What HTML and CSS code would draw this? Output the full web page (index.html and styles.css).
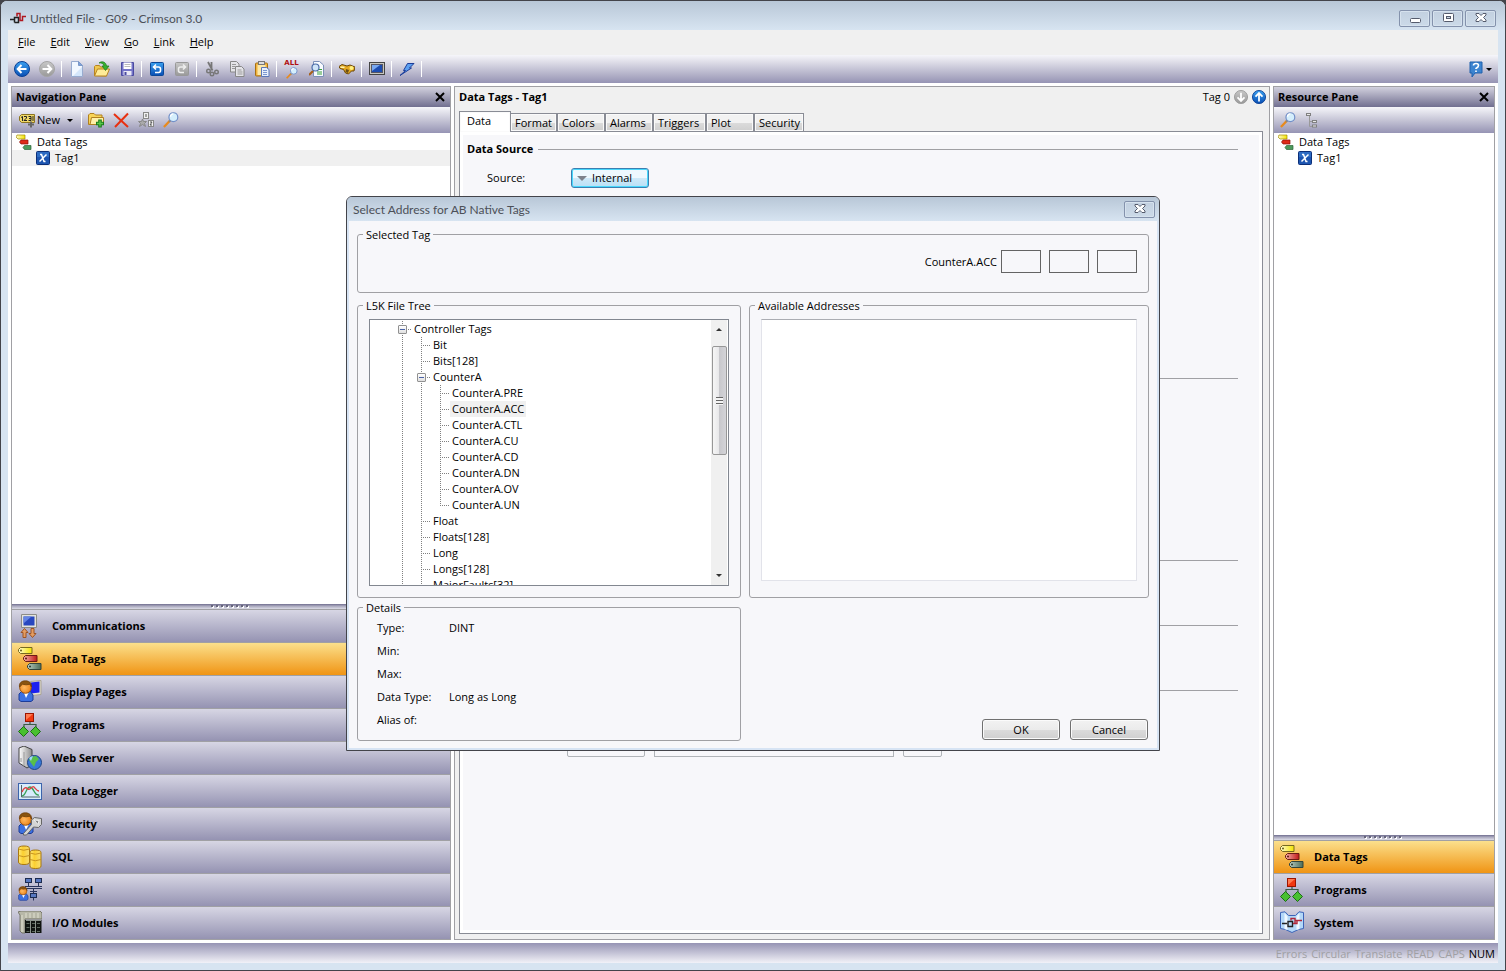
FILE: index.html
```html
<!DOCTYPE html>
<html lang="en">
<head>
<meta charset="utf-8">
<title>Untitled File - G09 - Crimson 3.0</title>
<link rel="stylesheet" href="styles.css">
</head>
<body>
<svg class="defs" aria-hidden="true">
  <defs>
    <linearGradient id="blue" x1="0" y1="0" x2="0" y2="1"><stop offset="0" stop-color="#3aa0f0"/><stop offset="1" stop-color="#0a4fb4"/></linearGradient>
    <linearGradient id="grey" x1="0" y1="0" x2="0" y2="1"><stop offset="0" stop-color="#c8c8c8"/><stop offset="1" stop-color="#999"/></linearGradient>
    <linearGradient id="yel" x1="0" y1="0" x2="1" y2="0"><stop offset="0" stop-color="#fffbd0"/><stop offset="1" stop-color="#f4e400"/></linearGradient>
    <linearGradient id="red" x1="0" y1="0" x2="1" y2="0"><stop offset="0" stop-color="#f6b0a8"/><stop offset="1" stop-color="#c01818"/></linearGradient>
    <linearGradient id="grn" x1="0" y1="0" x2="1" y2="0"><stop offset="0" stop-color="#b8ccc0"/><stop offset="1" stop-color="#4c6c58"/></linearGradient>
    <linearGradient id="gold" x1="0" y1="0" x2="1" y2="0"><stop offset="0" stop-color="#ffe97a"/><stop offset=".4" stop-color="#fbd030"/><stop offset="1" stop-color="#f7dc70"/></linearGradient>
    <linearGradient id="srv" x1="0" y1="0" x2="1" y2="0"><stop offset="0" stop-color="#fff"/><stop offset="1" stop-color="#8c8c8c"/></linearGradient>
    <radialGradient id="face" cx=".4" cy=".5" r=".6"><stop offset="0" stop-color="#ffb860"/><stop offset="1" stop-color="#ec8418"/></radialGradient>
  </defs>
  <symbol id="i-logo" viewBox="0 0 16 16"><path d="M0 9.500h4M4.500 12.500h4v-5h-4v5" fill="none" stroke="#222" stroke-width="1.500"/><path d="M7 6.500V3.500h3v7h2.500V6.500H16" fill="none" stroke="#b01820" stroke-width="1.500"/></symbol>
  <symbol id="i-tags-s" viewBox="0 0 16 16"><path d="M1 1h8v4H2L0 3z" fill="url(#yel)" stroke="#a08a00" stroke-width=".7"/><path d="M5 6h7v4H5L3.500 8z" fill="#e02a18" stroke="#8a1208" stroke-width=".7"/><path d="M8.500 11.500H15v4H8.500L7 13.500z" fill="#4c9a5c" stroke="#2c6438" stroke-width=".7"/></symbol>
  <symbol id="i-x" viewBox="0 0 14 14"><rect x=".5" y=".5" width="13" height="13" rx="1" fill="#1d55b0" stroke="#0c2f78"/><path d="M1 1h12v5H1z" fill="#3a7bd0" opacity=".6"/><path d="M4 3.500h1.500l2.500 7h1.500M10.500 3.500L3.500 10.500" fill="none" stroke="#fff" stroke-width="1.500"/></symbol>
  <symbol id="i-loupe" viewBox="0 0 17 17"><path d="M1 16l6.500-7" stroke="#e88a1c" stroke-width="2.400"/><path d="M6.500 10.500L8.500 8" stroke="#888" stroke-width="2"/><circle cx="11" cy="5.500" r="4.700" fill="#d4eefc" stroke="#7390c8" stroke-width="1.300"/><path d="M8 5a3 3 0 0 1 3-3" stroke="#fff" stroke-width="1.500" fill="none"/></symbol>
  <symbol id="i-tags" viewBox="0 0 24 24"><path d="M2.500.5H14v6H2.500L.5 4.500v-2z" fill="url(#yel)" stroke="#766a20"/><circle cx="3" cy="3.500" r="1" fill="#665c20"/><path d="M7.500 8.500H19v6H7.500l-2-2v-2z" fill="url(#red)" stroke="#6c1c14"/><circle cx="8" cy="11.500" r="1" fill="#5a1810"/><path d="M11.500 16.500H23v6H11.500l-2-2v-2z" fill="url(#grn)" stroke="#34453a"/><circle cx="12" cy="19.500" r="1" fill="#2a382e"/></symbol>
  <symbol id="i-programs" viewBox="0 0 24 24"><path d="M12 9v3M6 15v-3.500h12V15" fill="none" stroke="#3c5c46" stroke-width="1.200"/><rect x="7.500" y=".5" width="8" height="8" fill="#f03810" stroke="#9c1400"/><path d="M8 1h7l-7 6z" fill="#ff7a50"/><path d="M5.500 13.500l5 5-5 5-5-5z" fill="#48c030" stroke="#1c6c18"/><path d="M17.500 13.500l5 5-5 5-5-5z" fill="#48c030" stroke="#1c6c18"/></symbol>
  <symbol id="i-person" viewBox="0 0 24 24"><path d="M1 20v-6l3-3h8l3 4v5l-2 1.500H3z" fill="#3c70e0" stroke="#1c3c98"/><path d="M6 13l2 5 2.500-5z" fill="#fff"/><circle cx="7.500" cy="7.500" r="5.800" fill="url(#face)" stroke="#98500c"/><path d="M1.500 7C.8 2.500 4 .8 7.500.8S14 3 13.500 7L12 4.200Q8 5.500 4.500 4.200z" fill="#8a5410" stroke="#6a3c08" stroke-width=".7"/></symbol>
</svg>

<div class="window">
  <header class="titlebar">
    <svg class="ic16"><use href="#i-logo"/></svg>
    <h1 class="caption">Untitled File - G09 - Crimson 3.0</h1>
    <div class="winbtns">
      <button class="winbtn" aria-label="Minimize"><svg width="12" height="12"><rect x="1.500" y="6.500" width="10" height="4" rx="1" fill="#fff" stroke="#555b6c"/></svg></button>
      <button class="winbtn" aria-label="Maximize"><svg width="12" height="12"><rect x="1.500" y="1.500" width="10" height="8" rx="1" fill="#fff" stroke="#555b6c"/><rect x="4.500" y="4.500" width="4" height="2" fill="#c8d4e2" stroke="#555b6c"/></svg></button>
      <button class="winbtn" aria-label="Close"><svg width="12" height="12"><path d="M1 1.500h3l2 2 2-2h3V3L8.500 5.500 11 8v1.500H8l-2-2-2 2H1V8l2.500-2.500L1 3z" fill="#fff" stroke="#555b6c"/></svg></button>
    </div>
  </header>

  <nav class="menubar">
    <button><u>F</u>ile</button><button><u>E</u>dit</button><button><u>V</u>iew</button><button><u>G</u>o</button><button><u>L</u>ink</button><button><u>H</u>elp</button>
  </nav>

  <div class="toolbar main-tools">
    <button aria-label="Back"><svg class="ic16" viewBox="0 0 16 16"><circle cx="8" cy="8" r="7.500" fill="url(#blue)" stroke="#0a3f94"/><path d="M12.500 8H4M7.500 4L3.700 8l3.800 4" fill="none" stroke="#fff" stroke-width="2"/></svg></button>
    <button aria-label="Forward"><svg class="ic16" viewBox="0 0 16 16"><circle cx="8" cy="8" r="7.500" fill="url(#grey)" stroke="#a4a4a4"/><path d="M3.500 8H12M8.500 4l3.800 4-3.800 4" fill="none" stroke="#fff" stroke-width="2"/></svg></button>
    <i class="sep"></i>
    <button aria-label="New file"><svg class="ic16" viewBox="0 0 16 16"><path d="M2.500.5h7l4 4v11h-11z" fill="#f2f8ff" stroke="#98acd0"/><path d="M4 15L13 6v9z" fill="#d4e6fa"/><path d="M9.500.5v4h4z" fill="#7ca4dc" stroke="#7c98c8"/></svg></button>
    <button aria-label="Open"><svg class="ic16" viewBox="0 0 16 16"><path d="M.5 14.500V5.500l1-1h4l1 1.500h6v9z" fill="#f0c850" stroke="#b88420"/><path d="M.5 15l3-7h12l-3 7z" fill="#ffec98" stroke="#b88420"/><path d="M5 2c3-2.500 7-1 7.500 3H15l-3.500 4.500L8 5h2C9.500 2.500 7.500 1.500 5 2z" fill="#38b030" stroke="#1c7818" stroke-width=".7"/></svg></button>
    <button aria-label="Save"><svg class="ic16" viewBox="0 0 16 16"><path d="M2.500 1.500h12v13h-12z" fill="#7474c8" stroke="#4a4aa0"/><path d="M4.500 1.500h8V8h-8z" fill="#fff"/><path d="M5.500 3.500h6M5.500 5.500h6" stroke="#bbb"/><path d="M4.500 10h8v4.500h-8z" fill="#e8e8f4"/><path d="M5.500 11h2v3h-2z" fill="#4a4aa0"/></svg></button>
    <i class="sep"></i>
    <button aria-label="Undo"><svg class="ic16" viewBox="0 0 16 16"><rect x="1.500" y="1.500" width="13" height="13" rx="1" fill="url(#blue)" stroke="#0c4898"/><path d="M7 3.500L4.500 6 7 8.500M5 6h4.500q2 0 2 2v1.500q0 2-2 2H6" fill="none" stroke="#fff" stroke-width="1.600"/></svg></button>
    <button aria-label="Redo"><svg class="ic16" viewBox="0 0 16 16"><rect x="1.500" y="1.500" width="13" height="13" rx="1" fill="url(#grey)" stroke="#999"/><path d="M9 3.500L11.500 6 9 8.500M11 6H6.500q-2 0-2 2v1.500q0 2 2 2H10" fill="none" stroke="#eee" stroke-width="1.600"/></svg></button>
    <i class="sep"></i>
    <button aria-label="Cut"><svg class="ic16" viewBox="0 0 16 16"><path d="M4 1l4.500 8.500M7.500 1v8" stroke="#777" stroke-width="1.800"/><circle cx="4.500" cy="10" r="1.800" fill="none" stroke="#777" stroke-width="1.400"/><circle cx="8" cy="13" r="1.800" fill="none" stroke="#777" stroke-width="1.400"/><circle cx="12.500" cy="11" r="1.800" fill="none" stroke="#777" stroke-width="1.400"/></svg></button>
    <button aria-label="Copy"><svg class="ic16" viewBox="0 0 16 16"><g fill="#e4e4e8" stroke="#888"><path d="M1.500.5h6l2.500 2.500v8H1.500z"/><path d="M6.500 5.500h6L15 8v7.500H6.500z"/></g><path d="M3 3.500h4M3 5.500h3M3 7.500h3M8.500 9h4M8.500 11h5M8.500 13h5" stroke="#999"/></svg></button>
    <button aria-label="Paste"><svg class="ic16" viewBox="0 0 16 16"><rect x="1.500" y="2" width="12" height="13" rx="1" fill="#f0b440" stroke="#a87010"/><path d="M3.500 4h8v10h-8z" fill="#fce8a8"/><rect x="4.500" y=".5" width="6" height="3" fill="#ddd" stroke="#777"/><path d="M7.500 6.500h5l2.500 2v7H7.500z" fill="#e8f0fc" stroke="#5c78b8"/><path d="M9 9.500h4M9 11.500h4M9 13.500h4" stroke="#7c98d0"/></svg></button>
    <i class="sep"></i>
    <button aria-label="Find all" class="find-all"><span>ALL</span><svg width="12" height="12" viewBox="0 0 17 17"><use href="#i-loupe"/></svg></button>
    <button aria-label="Find in file"><svg class="ic16" viewBox="0 0 16 16"><path d="M4.500.5h6L14.500 4v11.500h-10z" fill="#f8fbff" stroke="#7c90b8"/><path d="M9 8.500h4M8 11h5M8 13h5" stroke="#38a038" stroke-width="1.200"/><path d="M0 14l4-4" stroke="#a86018" stroke-width="2.200"/><circle cx="6.500" cy="6.500" r="3.500" fill="#cfe4f8" stroke="#4c6ca8" stroke-width="1.200"/></svg></button>
    <i class="sep"></i>
    <button aria-label="Browse"><svg class="ic16" viewBox="0 0 16 16"><path d="M0 5.500l3-2 5 1.500 3-1 5 2-1 4h-2.500l-3 3-3-1-2-3.500-3.500-1z" fill="#e4a820" stroke="#6c4808"/><circle cx="12.500" cy="7" r="2" fill="#fff080"/><path d="M1.500 5.500h4v1.500h-4z" fill="#fff4b0"/><path d="M7 8l3 1-1 3-2.500-1z" fill="#6c5018"/></svg></button>
    <i class="sep"></i>
    <button aria-label="Emulator"><svg class="ic16" viewBox="0 0 16 16"><rect x=".5" y="1.500" width="15" height="12" fill="#c8c8c0" stroke="#444"/><rect x="2.500" y="3.500" width="11" height="8" fill="#1c4cb0" stroke="#556"/><path d="M3 4h8l-8 6z" fill="#78a8f0"/></svg></button>
    <i class="sep"></i>
    <button aria-label="Download"><svg class="ic16" viewBox="0 0 16 16"><path d="M8.500 2.500H15l-4.500 4.500h2L1 14.500l5.500-5h-2z" fill="#5ca0f0" stroke="#1c3c98"/></svg></button>
    <i class="sep"></i>
    <span class="grow"></span>
    <button aria-label="Help" class="help"><svg class="ic16" viewBox="0 0 16 16"><path d="M2 1h12v11H7l-3 4v-4H2z" fill="#3c84d0" stroke="#2060ac"/><path d="M5.500 4.500q0-2 2.500-2t2.500 2Q10.500 6 8 7.500V8M8 9.500v1.500" fill="none" stroke="#fff" stroke-width="1.600"/></svg><i class="caret"></i></button>
  </div>

  <main class="panes">
    <section class="pane side">
      <div class="pane-head"><h2>Navigation Pane</h2><button aria-label="Close pane"><svg width="10" height="10"><path d="M1 1l8 8M9 1L1 9" stroke="#000" stroke-width="2"/></svg></button></div>
      <div class="toolbar">
        <button class="new"><svg class="ic16" viewBox="0 0 16 16"><path d="M2.500 2.500h13v8h-13L.5 8.500v-4z" fill="#f0d868" stroke="#8c7420"/><path d="M2 5.500l1.500-1V9M5 4.500h2.500v1.500L5 8.500h3M9.500 4.500H12v4H9.500M10 6.500h2M14 4v5" stroke="#222" fill="none"/><path d="M12 9.500v6M9 12.500h6" stroke="#666" stroke-width="2"/></svg>New<i class="caret"></i></button>
        <i class="sep"></i>
        <button aria-label="New folder"><svg class="ic16" viewBox="0 0 16 16"><path d="M.5 12.500V3l1.500-1.500h4L7.500 3H14v9.500z" fill="#f8d458" stroke="#b08020"/><path d="M2 12.500l1.500-7h12V12.500z" fill="#fff0a8" stroke="#b08020"/><path d="M12 7.500v8M8 11.500h8" stroke="#1c7c1c" stroke-width="3.600"/><path d="M12 8.500v6M9 11.500h6" stroke="#58c848" stroke-width="1.400"/></svg></button>
        <button aria-label="Delete"><svg class="ic16" viewBox="0 0 16 16"><path d="M1 2l14 13M15 1.500L2 15" stroke="#e83010" stroke-width="2"/></svg></button>
        <button aria-label="Sort"><svg class="ic16" viewBox="0 0 16 16"><g fill="#f0f0f0" stroke="#888"><rect x="5.500" y=".5" width="5" height="6"/><rect x="10.500" y="8.500" width="5" height="6"/><path d="M4.500 7l1 2.500h3L6.500 11.500l1 3-3-2-3 2 1-3L.5 9.500h3z" fill="#aaa"/></g><path d="M8 2v3M12 10h2l-2 3h2" stroke="#555" fill="none"/></svg></button>
        <button aria-label="Find"><svg class="ic16"><use href="#i-loupe"/></svg></button>
      </div>
      <ul class="tree">
        <li><svg class="ic16"><use href="#i-tags-s"/></svg>Data Tags</li>
        <li class="child on"><svg class="ic14"><use href="#i-x"/></svg>Tag1</li>
      </ul>
      <div class="splitter"></div>
      <nav class="cats">
        <button><svg class="ic24" viewBox="0 0 24 24"><path d="M3.500.5h15v13h-15z" fill="#e4e4dc" stroke="#8c8c88"/><path d="M5.500 2.500h11v9h-11z" fill="#2848c0"/><path d="M5.500 2.500h8l-8 7z" fill="#6484e4"/><path d="M6.500 14.500l3.500 4H8v5H5v-5H3zM14.500 23.500l3.500-4h-2v-5h-3v5h-2z" fill="#e49c60" stroke="#9c5424"/></svg>Communications</button>
        <button class="on"><svg class="ic24"><use href="#i-tags"/></svg>Data Tags</button>
        <button><svg class="ic24" viewBox="0 0 24 24"><path d="M12.500 1.500L23 .5v14l-9 1z" fill="#e4e0d4" stroke="#aaa494"/><path d="M13 2.500l8.500-1v11l-8.500 1z" fill="#1c20f0"/><use href="#i-person"/></svg>Display Pages</button>
        <button><svg class="ic24"><use href="#i-programs"/></svg>Programs</button>
        <button><svg class="ic24" viewBox="0 0 24 24"><path d="M1 2l5-2 8 3.500V19l-5 3L1 17z" fill="url(#srv)" stroke="#444"/><path d="M6 6v14M3 12v4" stroke="#999"/><circle cx="16.500" cy="16.500" r="7" fill="#3878d8" stroke="#1c4484"/><path d="M13 11l5-1 3 3-3 3-2 5-3-4-2-3z" fill="#58c048"/><path d="M11 12q2-2 4-2l-2 5z" fill="#a0d8f8"/></svg>Web Server</button>
        <button><svg class="ic24" viewBox="0 0 24 24"><rect x=".5" y="4.500" width="23" height="16" fill="#d8ecfc" stroke="#3c64ac"/><path d="M3.500 6v12H22" fill="none" stroke="#566"/><path d="M4 17c4 0 4-9 8-9s4 9 9 8" fill="none" stroke="#38a058" stroke-width="1.300"/><path d="M4 13c2-5 4-5 6-3s4-4 6-2 3 4 5 4" fill="none" stroke="#e04040" stroke-width="1.300"/></svg>Data Logger</button>
        <button><svg class="ic24" viewBox="0 0 24 24"><use href="#i-person"/><path d="M5.500 21.500l8-9V8l3-2.500 7 1v6l-3 3-5-.5-7 8h-3z" fill="#d4d4d4" stroke="#666"/><path d="M16 8l5 .5-1 4z" fill="#888" stroke="#eee"/></svg>Security</button>
        <button><svg class="ic24" viewBox="0 0 24 24"><g fill="url(#gold)" stroke="#a87810"><path d="M.5 3.500q0-2.500 5.500-2.500t5.500 2.500V17q0 2.500-5.500 2.500T.5 17z"/><path d="M12 7.500Q12 5 17.500 5T23 7.500V21q0 2.500-5.500 2.500T12 21z"/></g><path d="M.5 10.500q5 2.500 11 0M12 14.500q5 2.500 11 0M.5 4q5 2.500 11 0M12 8q5 2.500 11 0" fill="none" stroke="#c89420"/></svg>SQL</button>
        <button><svg class="ic24" viewBox="0 0 24 24"><g fill="#5878c0" stroke="#1c2c50"><rect x="7.500" y=".5" width="6" height="4"/><rect x="17.500" y=".5" width="6" height="4"/><rect x="12.500" y="15.500" width="6" height="4"/></g><path d="M7 8.500h17M7 10.500h17M10.500 4.500v4M20.500 4.500v4M15.500 10.500v5M12 13.500h7M15.500 20v2.500" stroke="#28345c" fill="none"/><svg x="0" y="8" width="16" height="16"><use href="#i-person"/></svg></svg>Control</button>
        <button><svg class="ic24" viewBox="0 0 24 24"><path d="M0 1l3-1h19l2 2v6H7v14H4L2 20V4z" fill="#b8b8a8" stroke="#77776a"/><path d="M7 9h16.500v13H7z" fill="#101410"/><path d="M4 4v17M8 2v5M12 2v5M16 2v5M20 2v5" stroke="#e0e0d0"/><path d="M8 9.500h15M12.500 9v13M17.500 9v13" stroke="#8c948c"/><path d="M8.500 12.500h3M14 12.500h3M19 12.500h3M8.500 16.500h3M14 16.500h3M19 16.500h3M8.500 20.500h3M14 20.500h3M19 20.500h3" stroke="#5c685c"/></svg>I/O Modules</button>
      </nav>
    </section>

    <section class="pane editor">
      <div class="editor-head"><h2>Data Tags - Tag1</h2><span>Tag 0</span>
        <button aria-label="Next"><svg class="ic14" viewBox="0 0 16 16"><circle cx="8" cy="8" r="7.500" fill="url(#grey)" stroke="#999"/><path d="M8 3v9M4 8.500l4 4 4-4" fill="none" stroke="#fff" stroke-width="2"/></svg></button>
        <button aria-label="Previous"><svg class="ic14" viewBox="0 0 16 16"><circle cx="8" cy="8" r="7.500" fill="url(#blue)" stroke="#0a3f94"/><path d="M8 13V4M4 7.500l4-4 4 4" fill="none" stroke="#fff" stroke-width="2"/></svg></button>
      </div>
      <div class="tabs" role="tablist">
        <button class="on" role="tab">Data</button><button role="tab">Format</button><button role="tab">Colors</button><button role="tab">Alarms</button><button role="tab" class="wide">Triggers</button><button role="tab">Plot</button><button role="tab">Security</button>
      </div>
      <div class="sheet">
        <section class="group first">
          <h3>Data Source</h3>
          <div class="field"><span>Source:</span><button class="drop"><i></i>Internal</button></div>
        </section>
        <section class="group tall"></section>
        <section class="group short"></section>
        <section class="group short"></section>
        <section class="group last"><div class="row"><button class="b1" aria-label="Mode"></button><input aria-label="Value"><button class="b2" aria-label="Pick"></button></div></section>
      </div>
    </section>

    <section class="pane side">
      <div class="pane-head"><h2>Resource Pane</h2><button aria-label="Close pane"><svg width="10" height="10"><path d="M1 1l8 8M9 1L1 9" stroke="#000" stroke-width="2"/></svg></button></div>
      <div class="toolbar">
        <button aria-label="Find"><svg class="ic16"><use href="#i-loupe"/></svg></button>
        <button aria-label="Expand"><svg class="ic16" viewBox="0 0 16 16"><path d="M4.500 4v10.500H7M4.500 9.500H7" fill="none" stroke="#999"/><g fill="#e8e8e8" stroke="#808080"><rect x="1.500" y="1.500" width="4" height="2"/><rect x="7.500" y="8.500" width="4" height="2"/><rect x="7.500" y="13" width="4" height="2"/></g></svg></button>
      </div>
      <ul class="tree">
        <li><svg class="ic16"><use href="#i-tags-s"/></svg>Data Tags</li>
        <li class="child"><svg class="ic14"><use href="#i-x"/></svg>Tag1</li>
      </ul>
      <div class="splitter"></div>
      <nav class="cats">
        <button class="on"><svg class="ic24"><use href="#i-tags"/></svg>Data Tags</button>
        <button><svg class="ic24"><use href="#i-programs"/></svg>Programs</button>
        <button><svg class="ic24" viewBox="0 0 24 24"><path d="M.5 1.500L5 .8l3.500 3.700h7L19 .8l4.500.7v16l-5 1-6.500 3-6.500-3-5-1z" fill="#b4d8f8" stroke="#3c64b8"/><path d="M4.500 2l3 3.500v13.500l-3-1zM19.500 2l-3 3.500v13.500l3-1z" fill="#f0f8ff"/><path d="M2 12.500h5M8 15.500h4.500v-5H8z" fill="none" stroke="#222" stroke-width="1.400"/><path d="M11 9.500v-2h4v5M15 9.500h7M13 12.500h4v-3" fill="none" stroke="#b02838" stroke-width="1.400"/></svg>System</button>
      </nav>
    </section>
  </main>

  <footer class="status"><span>Errors</span><span>Circular</span><span>Translate</span><span>READ</span><span>CAPS</span><span class="on">NUM</span></footer>
</div>

<div class="dialog" role="dialog" aria-labelledby="dlg-title">
  <header><h2 id="dlg-title" class="caption">Select Address for AB Native Tags</h2>
    <button class="winbtn" aria-label="Close dialog"><svg width="12" height="12"><path d="M1 1.500h3l2 2 2-2h3V3L8.500 5.500 11 8v1.500H8l-2-2-2 2H1V8l2.500-2.500L1 3z" fill="#fff" stroke="#555b6c"/></svg></button></header>
  <div class="client">
    <fieldset class="selected"><legend>Selected Tag</legend>
      <div class="address"><label for="ix1">CounterA.ACC</label><input id="ix1"><input aria-label="Index 2"><input aria-label="Index 3"></div>
    </fieldset>
    <div class="lists">
      <fieldset><legend>L5K File Tree</legend>
        <div class="filebox">
          <ul class="filetree">
            <li><i class="g tee"><button aria-label="Collapse Controller Tags"></button></i><span>Controller Tags</span></li>
            <li><i class="g"></i><i class="g tee"></i><span>Bit</span></li>
            <li><i class="g"></i><i class="g tee"></i><span>Bits[128]</span></li>
            <li><i class="g"></i><i class="g tee"><button aria-label="Collapse CounterA"></button></i><span>CounterA</span></li>
            <li><i class="g"></i><i class="g"></i><i class="g tee"></i><span>CounterA.PRE</span></li>
            <li><i class="g"></i><i class="g"></i><i class="g tee"></i><span class="on">CounterA.ACC</span></li>
            <li><i class="g"></i><i class="g"></i><i class="g tee"></i><span>CounterA.CTL</span></li>
            <li><i class="g"></i><i class="g"></i><i class="g tee"></i><span>CounterA.CU</span></li>
            <li><i class="g"></i><i class="g"></i><i class="g tee"></i><span>CounterA.CD</span></li>
            <li><i class="g"></i><i class="g"></i><i class="g tee"></i><span>CounterA.DN</span></li>
            <li><i class="g"></i><i class="g"></i><i class="g tee"></i><span>CounterA.OV</span></li>
            <li><i class="g"></i><i class="g"></i><i class="g tee end"></i><span>CounterA.UN</span></li>
            <li><i class="g"></i><i class="g tee"></i><span>Float</span></li>
            <li><i class="g"></i><i class="g tee"></i><span>Floats[128]</span></li>
            <li><i class="g"></i><i class="g tee"></i><span>Long</span></li>
            <li><i class="g"></i><i class="g tee"></i><span>Longs[128]</span></li>
            <li><i class="g"></i><i class="g tee"></i><span>MajorFaults[32]</span></li>
          </ul>
          <div class="scroll"><i class="up"></i><div class="thumb"><i></i></div><i class="down"></i></div>
        </div>
      </fieldset>
      <fieldset><legend>Available Addresses</legend><div class="avail"></div></fieldset>
    </div>
    <div class="bottom">
      <fieldset><legend>Details</legend>
        <dl><dt>Type:</dt><dd>DINT</dd><dt>Min:</dt><dd></dd><dt>Max:</dt><dd></dd><dt>Data Type:</dt><dd>Long as Long</dd><dt>Alias of:</dt><dd></dd></dl>
      </fieldset>
      <div class="actions"><button>OK</button><button>Cancel</button></div>
    </div>
  </div>
</div>
</body>
</html>
```
FILE: styles.css
```css
* { box-sizing: border-box; }
html, body { height: 100%; }
body {
  margin: 0;
  background: #43444a;
  color: #000;
  font: 11px/16px "Open Sans", "Noto Sans", sans-serif;
}
button, input { font: inherit; color: inherit; margin: 0; padding: 0; border: 0; background: none; }
h1, h2, h3, ul, dl, dd, fieldset { margin: 0; padding: 0; font-size: inherit; }
ul { list-style: none; }
svg { flex: none; }
.defs { position: absolute; width: 0; height: 0; }
.ic14 { width: 14px; height: 14px; }
.ic16 { width: 16px; height: 16px; }
.ic24 { width: 24px; height: 24px; }
.grow { flex: 1; }

.window {
  height: 100vh;
  display: flex;
  flex-direction: column;
  padding: 0 7px 7px;
  border: 1px solid #43444a;
  border-radius: 7px 7px 0 0;
  background: #d7e4f1;
}
.titlebar {
  flex: none;
  height: 29px;
  margin: 0 -7px;
  padding: 5px 9px 0 9px;
  display: flex;
  align-items: center;
  gap: 4px;
  border-radius: 6px 6px 0 0;
  background: linear-gradient(#b8c7d7, #d7e4f1);
}
.caption { padding-top: 1px; font-family: Lato, "Open Sans", sans-serif; font-size: 12px; font-weight: 400; color: #4c5058; flex: 1; }
.winbtns { display: flex; gap: 2px; }
.winbtn {
  width: 31px;
  height: 17px;
  display: grid;
  place-items: center;
  border: 1px solid #8492ac;
  border-radius: 2px;
  background: linear-gradient(#c2d0e0, #ccdae8);
  box-shadow: inset 0 0 0 1px #d6e2ee;
}
.menubar { flex: none; height: 25px; padding: 0 0 2px 10px; display: flex; align-items: center; gap: 15px; background: #f0f0f0; }

.toolbar {
  flex: none;
  height: 26px;
  padding: 0 1px;
  display: flex;
  align-items: center;
  background: linear-gradient(#f6f6fa, #c6c5d6 50%, #9694b4);
}
.main-tools { height: 28px; }
.toolbar button { width: 25px; height: 24px; display: flex; align-items: center; justify-content: center; }
.toolbar .new { width: auto; gap: 2px; padding: 0 6px; }
.toolbar .help { width: 34px; gap: 2px; }
.sep { width: 5px; height: 16px; border-left: 2px solid transparent; background: linear-gradient(90deg, #fff 1px, transparent 1px); }
.caret { width: 0; height: 0; border: 3px solid transparent; border-top-color: #000; border-bottom: 0; }
.new .caret { margin-left: 5px; }
.toolbar .find-all { flex-direction: column; font: 700 7px/7px "DejaVu Sans", sans-serif; color: #b01010; }

.panes {
  flex: 1;
  min-height: 0;
  padding: 3px;
  display: grid;
  grid-template-columns: 440px minmax(0, 1fr) 222px;
  gap: 3px;
  background: #fff;
}
.pane { display: flex; flex-direction: column; min-height: 0; border: 1px solid #a0a0a4; }
.side { background: #fff; }
.pane-head {
  flex: none;
  height: 20px;
  padding: 0 5px 0 4px;
  display: flex;
  align-items: center;
  justify-content: space-between;
  background: linear-gradient(#d2d1de, #716f90);
}
.pane-head button { display: flex; }
.tree { flex: 1; padding-top: 1px; }
.tree li { height: 16px; display: flex; align-items: center; gap: 5px; padding-left: 4px; }
.tree .child { padding-left: 24px; }
.tree .on { background: #f0f0f0; }
.splitter {
  flex: none;
  height: 5px;
  background: linear-gradient(#6f6d8e, #a8a7bd 2px, #dcdce6);
  position: relative;
}
.splitter::after {
  content: "";
  position: absolute;
  left: calc(50% - 20px);
  top: 1px;
  width: 38px;
  height: 3px;
  background:
    repeating-linear-gradient(90deg, #66657c 0 2px, transparent 2px 5px) 0 0 / 100% 2px no-repeat,
    repeating-linear-gradient(90deg, transparent 0 1px, #fff 1px 3px, transparent 3px 5px) 0 1px / 100% 2px no-repeat;
}
.cats { flex: none; display: flex; flex-direction: column; }
.cats button {
  height: 33px;
  padding: 0 6px;
  display: flex;
  align-items: center;
  gap: 10px;
  border-top: 1px solid #a0a0a4;
  background: linear-gradient(#d7d6e4, #9593b2);
  font-weight: 700;
}
.cats .on { background: linear-gradient(#fbe08c, #f09414); }

.editor { background: #f0f0f0; padding: 0 6px 5px 4px; }
.editor-head { flex: none; height: 20px; display: flex; align-items: center; gap: 4px; margin-right: -3px; }
.editor-head h2 { flex: 1; }
.editor-head button { display: flex; }
.tabs { flex: none; height: 25px; padding-top: 4px; display: flex; align-items: flex-end; position: relative; z-index: 1; margin-bottom: -1px; }
.tabs button {
  width: 48px;
  height: 19px;
  padding-left: 4px;
  text-align: left;
  border: 1px solid #898c95;
  box-shadow: inset 0 0 0 1px #fafafa;
  background: linear-gradient(#f2f2f2 50%, #dcdcdc 50%, #cfcfcf);
}
.tabs .wide { width: 53px; }
.tabs .on { width: 52px; height: 21px; padding: 0 0 2px 7px; border-bottom: 0; background: #fff; }
.tabs button:nth-child(2) { border-left: 0; width: 46px; }
.tabs button:last-child { width: 50px; }
.sheet { flex: 1; min-height: 0; padding: 9px 24px 0 7px; border: 1px solid #898c95; box-shadow: inset 0 0 0 3px #fff; background: #f7f7fa; overflow: hidden; }
.group h3 { display: flex; align-items: center; gap: 5px; }
.group h3::after { content: ""; flex: 1; border-top: 1px solid #a0a0a4; }
.first { height: 237px; }
.tall, .short, .last { border-top: 1px solid #a0a0a4; }
.tall { height: 182px; }
.short { height: 65px; }
.field { display: flex; align-items: center; padding: 11px 0 0 20px; }
.field span { width: 84px; }
.drop {
  width: 78px;
  height: 20px;
  padding-left: 5px;
  display: flex;
  align-items: center;
  gap: 5px;
  border: 1px solid #3c7fb1;
  border-radius: 3px;
  box-shadow: inset 0 0 0 1px #48d8fc;
  background: linear-gradient(#eef8fe 50%, #cfe9f8 50%, #b8e0f6);
}
.toolbar .drop { height: 20px; }
.drop i { border: 5px solid transparent; border-top-color: #7d828c; border-bottom: 0; }
.row { display: flex; gap: 9px; padding: 44px 0 0 100px; }
.row button, .row input { height: 22px; border: 1px solid #b0b4b8; background: #f7f7fa; border-radius: 2px; }
.row input { width: 240px; border-radius: 0; }
.row .b1 { width: 78px; }
.row .b2 { width: 39px; }

.status {
  flex: none;
  height: 20px;
  padding: 1px 3px 0;
  display: flex;
  align-items: center;
  justify-content: flex-end;
  gap: 4px;
  background: linear-gradient(#9694b4, #f2f2f8);
  color: #a0a0a4;
}
.status .on { color: #000; }

.dialog {
  position: absolute;
  left: 346px;
  top: 196px;
  width: 814px;
  display: flex;
  flex-direction: column;
  border: 1px solid #43444a;
  border-radius: 6px 6px 0 0;
  background: #d7e4f4;
  padding: 0 2px 2px;
}
.dialog > header {
  height: 24px;
  margin: 0 -2px;
  padding: 0 4px 0 6px;
  display: flex;
  align-items: center;
  border-radius: 5px 5px 0 0;
  background: linear-gradient(#b8c7d7, #d7e4f1);
}
.client { padding: 6px 8px 7px; background: #f7f7fa; display: flex; flex-direction: column; }
fieldset { min-width: 0; border: 1px solid #a0a0a4; border-radius: 3px; }
legend { margin-left: 5px; padding: 0 3px; height: 15px; line-height: 15px; }
.selected { height: 66px; }
.address { display: flex; justify-content: flex-end; align-items: center; gap: 8px; padding: 8px 11px 0 0; }
.address label { margin-right: -4px; }
.address input { width: 40px; height: 23px; border: 1px solid #646464; }
.lists { display: grid; grid-template-columns: 384px minmax(0, 1fr); gap: 8px; margin-top: 5px; }
.lists fieldset { height: 300px; padding: 6px 0 0; }
.filebox { height: 267px; margin: 0 11px; padding-right: 1px; display: flex; overflow: hidden; border: 1px solid #828790; background: #fff; }
.filetree { flex: 1; padding: 1px 0 0 32px; }
.filetree li { height: 16px; display: flex; }
.filetree span { padding: 0 2px; margin-left: -9px; }
.filetree .on { background: #f0f0f0; }
.g {
  position: relative;
  width: 19px;
  background: repeating-linear-gradient(#808080 0 1px, transparent 1px 2px) 0 0 / 1px 100% no-repeat;
}
.tee {
  background:
    repeating-linear-gradient(#808080 0 1px, transparent 1px 2px) 0 0 / 1px 100% no-repeat,
    repeating-linear-gradient(90deg, #808080 0 1px, transparent 1px 2px) 0 8px / 9px 1px no-repeat;
}
.end {
  background:
    repeating-linear-gradient(#808080 0 1px, transparent 1px 2px) 0 0 / 1px 8px no-repeat,
    repeating-linear-gradient(90deg, #808080 0 1px, transparent 1px 2px) 0 8px / 9px 1px no-repeat;
}
.g button {
  position: absolute;
  left: -4px;
  top: 4px;
  width: 9px;
  height: 9px;
  border: 1px solid #919191;
  border-radius: 1px;
  background: linear-gradient(#4b63a7, #4b63a7) center / 5px 1px no-repeat, linear-gradient(#fff, #e0e0e0);
}
.scroll { width: 16px; display: flex; flex-direction: column; align-items: center; background: #f0f0f0; }
.scroll .up { margin: 8px 0; border: 3px solid transparent; border-bottom-color: #333; border-top: 0; }
.scroll .down { margin: auto 0 8px; border: 3px solid transparent; border-top-color: #333; border-bottom: 0; }
.thumb {
  width: 15px;
  height: 109px;
  margin-top: 7px;
  display: grid;
  place-items: center;
  border: 1px solid #979797;
  border-radius: 2px;
  background: linear-gradient(90deg, #f6f6f6, #e8e8ea 45%, #c8c8cc 50%, #d4d4d8);
}
.thumb i { width: 7px; height: 8px; background: repeating-linear-gradient(#666 0 1px, #f4f4f4 1px 3px); }
.avail { height: 262px; margin: 0 11px; border: 1px solid #e2e3ea; border-top-color: #abadb3; background: #fff; }
.bottom { display: flex; justify-content: space-between; align-items: flex-end; margin-top: 2px; }
.bottom fieldset { width: 384px; height: 141px; }
dl { display: grid; grid-template-columns: 72px 1fr; grid-auto-rows: 23px; padding: 3px 0 0 19px; line-height: 20px; }
.actions { display: flex; gap: 10px; padding: 0 1px 1px 0; }
.actions button {
  width: 78px;
  height: 21px;
  border: 1px solid #707070;
  border-radius: 3px;
  box-shadow: inset 0 0 0 1px #fbfbfb;
  background: linear-gradient(#f2f2f2, #ebebeb 50%, #dcdcdc 50%, #cfcfcf);
}
```
